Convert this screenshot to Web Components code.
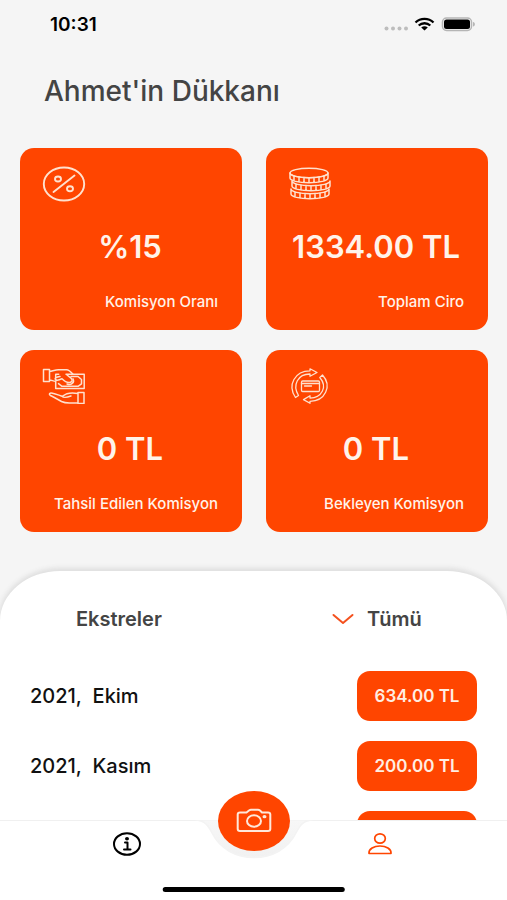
<!DOCTYPE html>
<html lang="tr">
<head>
<meta charset="utf-8">
<meta name="viewport" content="width=device-width, initial-scale=1">
<title>Ahmet'in Dükkanı</title>
<style>
  body { margin: 0; background: #f5f5f5; font-family: Inter, "Liberation Sans", sans-serif; }
</style>
</head>
<body>
<shop-app>
  <status-bar slot="status"></status-bar>
  <h1 slot="title">Ahmet'in Dükkanı</h1>
  <stat-card icon="percent" value="%15">Komisyon Oranı</stat-card>
  <stat-card icon="coins" value="1334.00 TL">Toplam Ciro</stat-card>
  <stat-card icon="hands" value="0 TL">Tahsil Edilen Komisyon</stat-card>
  <stat-card icon="cycle" value="0 TL">Bekleyen Komisyon</stat-card>
  <statement-sheet slot="sheet">
    <statement-row amount="634.00 TL">2021,&nbsp; Ekim</statement-row>
    <statement-row amount="200.00 TL">2021,&nbsp; Kasım</statement-row>
    <statement-row></statement-row>
  </statement-sheet>
  <tab-bar slot="tabs"></tab-bar>
</shop-app>
<script>
const define = (name, render) => customElements.define(name, class extends HTMLElement {
  connectedCallback() {
    if (this.shadowRoot) return;
    this.attachShadow({ mode: 'open' }).innerHTML = render(this);
  }
});

// One coin edge: the left and right sides, the lower rim and the ridges between the rims.
const coin = (cx, cy) => {
  const rim = y => `M${cx - 19} ${y}a19 4.800 0 0 0 38 0`;
  const ridges = [-15, -10, -5, 0, 5, 10, 15].map(d =>
    `M${cx + d} ${(cy + 4.8 * Math.sqrt(1 - (d / 19) ** 2)).toFixed(1)}v5`).join('');
  return `<path d="${rim(cy)}${rim(cy + 5)}M${cx - 19} ${cy}v5M${cx + 19} ${cy}v5${ridges}"/>`;
};

const icons = {
  percent: `<svg width="44" height="36" viewBox="0 0 44 36"><g stroke-width="1.9"><ellipse cx="22" cy="18" rx="20.200" ry="16.500"/><path d="M11.500 26 32.500 9.500"/><ellipse cx="16" cy="13" rx="3" ry="2.500"/><ellipse cx="28" cy="22.700" rx="3" ry="2.500"/></g></svg>`,
  coins: `<svg width="44" height="36" viewBox="0 0 44 36"><g stroke-width="1.500">
    <ellipse cx="21" cy="7" rx="19" ry="4.800"/>${coin(21, 7)}${coin(23, 15)}${coin(22, 23)}</g></svg>`,
  hands: `<svg width="44" height="36" viewBox="0 0 44 36"><g stroke-width="1.500">
    <path d="M1.500 1.500h6v12h-6zM7.500 3.500c3-.5 6-1.800 9-1.800h8c2 0 4.500 2.200 6.500 4.500M7.500 12c2.500 0 3.500 1.300 6 1.300M18 8.500c-4 .5-5.500 1.800-4.500 3 1.200 1.400 4 .5 6.500-.8 2.500 2.500 5.500 4.500 8.500 3.500 2-.6 2-2.500.8-3.800L25 7"/>
    <path d="M24 6.200h18.200v14.300H13.700v-7M13.700 10V6.200h3"/>
    <path d="M29 8.500h7l3.500 3v4.300l-3.500 2.500H20l-3.500-2.700"/>
    <path d="M31 10.800c2 4-2 6.700-6 5.200"/>
    <path d="M36 24.500h6v11h-6zM36 25.500c-3-.5-8-.7-11 .2l-5 2.600c-3-1.300-6.500-2.200-9.500-3.100-3-.8-4 1.200-2 2.300 4 2 8 4.300 11 6 2 1 5 1.500 8 1.500h8.500M20 28.300c1.500 1.700 5.500 1 9-.3"/></g></svg>`,
  cycle: `<svg width="44" height="36" viewBox="0 0 44 36"><g stroke-width="1.300">
    <path d="M7.500 29.500C-1 17 7 2.800 22 2.800V.8l7 3.700-7 3.800V6C10 6 4 17 10.500 27.500z"/>
    <path d="M34.500 7C44.500 18 37 33.300 22 33.300v2l-6.500-3.700 6.500-3.800v2.300C33.500 30 40 19 31.800 9.500z"/>
    <rect x="13.500" y="13" width="18" height="10.500" rx="1.200"/>
    <path d="M13.500 15.500h18M16.500 18h7"/></g></svg>`
};

define('status-bar', () => `
<style>
  :host { display: flex; justify-content: space-between; align-items: center; height: 48px; padding: 0 32px 0 50px; }
  time { font-size: 19px; font-weight: 600; color: #000; }
  svg { display: block; }
</style>
<time>10:31</time>
<svg width="92" height="16" viewBox="0 0 92 16" role="img" aria-label="Wi-Fi, pil dolu">
  <g fill="#bdbdbd"><circle cx="3.500" cy="12.500" r="2"/><circle cx="10" cy="12.500" r="2"/><circle cx="16.500" cy="12.500" r="2"/><circle cx="23" cy="12.500" r="2"/></g>
  <g fill="none" stroke="#000" stroke-width="2.300"><path d="M32.500 6.500c5-4.800 13-4.800 18 0M35.700 9.500c3.300-3 8.300-3 11.600 0"/></g>
  <path d="M38.200 11.500c2-1.600 4.600-1.600 6.600 0L41.500 14.500z"/>
  <rect x="59.500" y="2" width="29" height="12.500" rx="4" fill="#f5f5f5" stroke="#b5b5b5" stroke-width="1.500"/>
  <rect x="61" y="3.500" width="26" height="9.500" rx="2.500"/><path d="M90 6c2.500.5 2.500 4 0 4.500z" fill="#b5b5b5"/>
</svg>`);

define('stat-card', el => `
<style>
  :host { display: flex; flex-direction: column; justify-content: space-between; box-sizing: border-box; min-height: 182px; padding: 18px 24px 20px 22px; border-radius: 14px; background: #ff4500; color: #fff3ea; }
  svg { display: block; fill: none; stroke: #ffe1ce; stroke-linejoin: round; stroke-linecap: round; }
  strong { text-align: center; white-space: nowrap; font-size: 31px; line-height: 36px; font-weight: 600; padding-top: 14px; }
  span { text-align: right; font-size: 15px; line-height: 16px; font-weight: 500; padding-top: 16px; white-space: nowrap; }
</style>
${icons[el.getAttribute('icon')]}
<strong>${el.getAttribute('value')}</strong>
<span><slot></slot></span>`);

define('statement-row', el => `
<style>
  :host { display: flex; justify-content: space-between; align-items: center; padding: 0 30px; }
  span { font-size: 20px; font-weight: 500; color: #111; }
  button { min-width: 120px; height: 50px; padding: 0 16px; border: 0; border-radius: 13px; background: #ff4500; color: #ffeee2; font: 600 17px Inter, sans-serif; }
</style>
<span><slot></slot></span>
<button type="button" ${el.hasAttribute('amount') ? '' : 'aria-label="Ekstre"'}>${el.getAttribute('amount') || ''}</button>`);

define('statement-sheet', () => `
<style>
  :host { display: block; background: #fff; border-radius: 60px 60px 0 0 / 50px 50px 0 0; box-shadow: 0 -2px 5px 1px #dedede; }
  header { display: flex; justify-content: space-between; align-items: center; padding: 34px 85px 38px 76px; }
  h2, select { margin: 0; font: 600 20px/28px Inter, sans-serif; color: #444; }
  label { display: flex; align-items: center; gap: 13px; }
  select { appearance: none; border: 0; padding: 0; background: none; }
  .list { display: grid; gap: 20px; }
</style>
<header>
  <h2>Ekstreler</h2>
  <label>
    <svg width="22" height="12" viewBox="0 0 22 12" fill="none" stroke="#f4511e" stroke-width="2" stroke-linecap="round" stroke-linejoin="round"><path d="M1.500 2 11 10l9.500-8"/></svg>
    <select aria-label="Ekstre filtresi"><option>Tümü</option></select>
  </label>
</header>
<div class="list"><slot></slot></div>`);

define('tab-bar', () => `
<style>
  :host { display: block; position: relative; height: 80px; background: #fff; border-top: 1px solid #f0f0f0; box-sizing: border-box; }
  nav { display: grid; grid-template-columns: 1fr 1fr; justify-items: center; }
  a { display: block; padding: 10px 12px; color: #000; }
  a.active { color: #ff4500; }
  svg { display: block; fill: none; stroke: currentColor; stroke-linecap: round; stroke-linejoin: round; }
  .notch { position: absolute; top: -1px; left: 50%; transform: translateX(-50%); }
  button { position: absolute; top: -30px; left: 50%; transform: translateX(-50%); display: grid; place-items: center; width: 72px; height: 60px; padding: 0; border: 0; border-radius: 50%; background: #ff4500; color: #ffe8da; }
  .home { position: absolute; bottom: 8px; left: 50%; transform: translateX(-50%); width: 36%; height: 5px; border-radius: 3px; background: #000; }
</style>
<svg class="notch" width="120" height="42" viewBox="0 0 120 42">
  <defs><linearGradient id="g" x2="0" y2="1"><stop offset="0" stop-color="#f7f7f7"/><stop offset="1" stop-color="#f1f1f1"/></linearGradient></defs>
  <path d="M2 0C11 1 14 5 18 13 26 29 42 37.500 60 37.500S94 29 102 13C106 5 109 1 118 0z" fill="url(#g)" stroke="#f3f3f3" stroke-width="1.500"/>
</svg>
<nav>
  <a href="#bilgi" aria-label="Bilgi"><svg width="30" height="26" viewBox="0 0 30 26" stroke-width="2"><ellipse cx="15" cy="13" rx="13" ry="10.800"/><path d="M13 11.500h2.500v7M12 18.500h6.500"/><ellipse cx="15" cy="7.700" rx="1" ry=".7" fill="currentColor"/></svg></a>
  <a class="active" href="#profil" aria-label="Profil"><svg width="26" height="26" viewBox="0 0 26 26" stroke-width="1.700"><ellipse cx="13" cy="7.500" rx="5.300" ry="4.700"/><path d="M2 22.500c-.5-4.500 5-7.500 11-7.500s11.500 3 11 7.500z"/></svg></a>
</nav>
<button type="button" aria-label="Kamera"><svg width="36" height="26" viewBox="0 0 36 26" stroke-width="2"><path d="M4 4.500h6.500L13 2.500Q14 1.700 15 1.700h7q1 0 2 .8l2 2h6q2.300 0 2.300 2V21q0 2-2.300 2H4q-2.300 0-2.300-2V6.500q0-2 2.300-2z"/><ellipse cx="18" cy="13" rx="7" ry="5.800"/><ellipse cx="28.500" cy="8.700" rx="1" ry=".6"/></svg></button>
<div class="home"></div>`);

define('shop-app', () => `
<style>
  :host { display: flex; flex-direction: column; height: 100vh; overflow: hidden; }
  ::slotted(h1) { margin: 0; font-size: 28px; line-height: 36px; font-weight: 500; color: #444; }
  .title { padding: 25px 44px 39px; }
  .cards { display: grid; grid-template-columns: 1fr 1fr; gap: 20px 24px; padding: 0 19px 0 20px; }
  .sheet { flex: 1; min-height: 0; padding-top: 39px; overflow: hidden; }
</style>
<slot name="status"></slot>
<div class="title"><slot name="title"></slot></div>
<div class="cards"><slot></slot></div>
<div class="sheet"><slot name="sheet"></slot></div>
<slot name="tabs"></slot>`);
</script>
</body>
</html>
